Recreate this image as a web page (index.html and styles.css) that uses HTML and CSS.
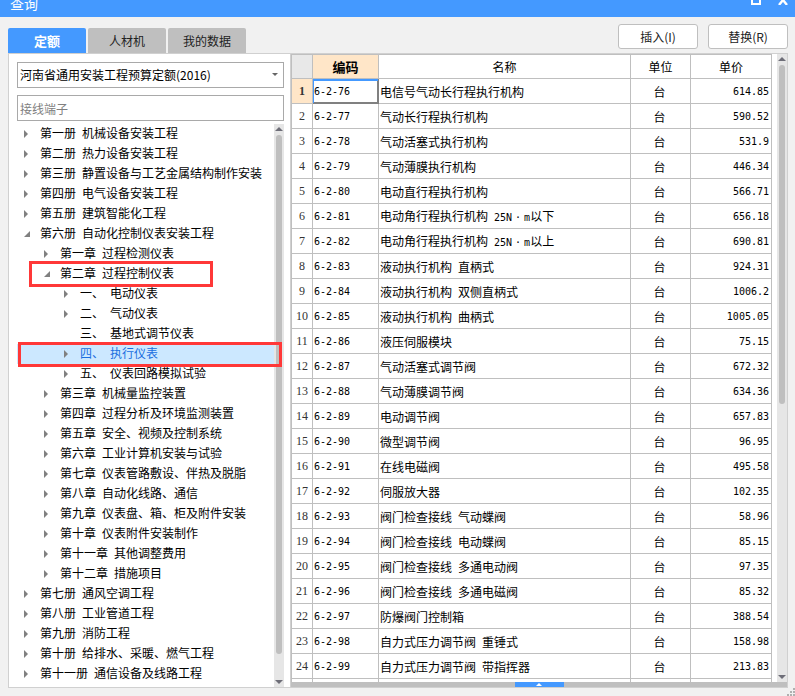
FILE: index.html
```html
<!DOCTYPE html>
<html lang="zh-CN">
<head>
<meta charset="utf-8">
<title>查询</title>
<link rel="stylesheet" href="styles.css">
</head>
<body>
<header class="titlebar">
  <h1 class="title">查询</h1>
  <div class="window-buttons">
    <button class="window-button" aria-label="最大化"><svg width="10" height="10" viewBox="0 0 10 10"><rect x="1" y="1" width="8" height="8" fill="none" stroke="#fff" stroke-width="2"/></svg></button>
    <button class="window-button" aria-label="关闭"><svg width="10" height="10" viewBox="0 0 10 10"><path d="M1 0L9 10M9 0L1 10" stroke="#fff" stroke-width="2.4"/></svg></button>
  </div>
</header>

<div class="toolbar">
  <nav class="tabs" role="tablist">
    <button class="tab tab-active" role="tab" aria-selected="true">定额</button>
    <button class="tab" role="tab" aria-selected="false">人材机</button>
    <button class="tab" role="tab" aria-selected="false">我的数据</button>
  </nav>
  <div class="actions">
    <button class="action">插入(I)</button>
    <button class="action">替换(R)</button>
  </div>
</div>

<main class="workspace">
  <section class="sidebar">
    <div class="select-wrap">
      <select class="field" aria-label="定额库"><option>河南省通用安装工程预算定额(2016)</option></select>
      <svg class="select-arrow" width="6" height="3" viewBox="0 0 6 3"><path d="M0 0H6L3 3Z" fill="#666"/></svg>
    </div>
    <input class="field" type="text" placeholder="接线端子" aria-label="搜索">
    <div class="tree-area">
      <ul class="tree" role="tree" id="tree"></ul>
      <div class="scrollbar">
        <svg class="scroll-arrow" width="8" height="4" viewBox="0 0 8 4"><path d="M0 4L4 0L8 4Z" fill="#6e6e78"/></svg>
        <div class="scroll-track"><div class="thumb thumb-tree"></div></div>
        <svg class="scroll-arrow" width="8" height="4" viewBox="0 0 8 4"><path d="M0 0L4 4L8 0Z" fill="#6e6e78"/></svg>
      </div>
    </div>
  </section>

  <section class="results">
    <div class="grid-area">
      <div class="table-wrap">
        <table class="grid">
          <colgroup><col class="col-num"><col class="col-code"><col><col class="col-unit"><col class="col-price"></colgroup>
          <thead><tr><th class="corner"></th><th class="head-active">编码</th><th>名称</th><th>单位</th><th>单价</th></tr></thead>
          <tbody id="rows"></tbody>
        </table>
      </div>
      <div class="scrollbar">
        <svg class="scroll-arrow" width="8" height="4" viewBox="0 0 8 4"><path d="M0 4L4 0L8 4Z" fill="#6e6e78"/></svg>
        <div class="scroll-track"><div class="thumb thumb-grid"></div></div>
        <svg class="scroll-arrow" width="8" height="4" viewBox="0 0 8 4"><path d="M0 0L4 4L8 0Z" fill="#6e6e78"/></svg>
      </div>
    </div>
    <div class="splitter">
      <button class="splitter-handle" aria-label="展开"><svg width="6" height="3" viewBox="0 0 6 3"><path d="M0 3L3 0L6 3Z" fill="#fff"/></svg></button>
    </div>
  </section>
</main>

<footer class="statusbar">
  <svg width="8" height="8" viewBox="0 0 8 8" fill="#b0b0b0"><path d="M6 0h2v2h-2zM3 3h2v2h-2zM6 3h2v2h-2zM0 6h2v2h-2zM3 6h2v2h-2zM6 6h2v2h-2z"/></svg>
</footer>
<script src="app.js"></script>
</body>
</html>
```
FILE: styles.css
```css
* { box-sizing: border-box; }

body {
  margin: 0;
  min-height: 100vh;
  display: flex;
  flex-direction: column;
  background: #f1f1f1;
  color: #000;
  font: 12px/20px "Noto Sans CJK SC", sans-serif;
}

button, input, select { font: inherit; color: inherit; margin: 0; }
button { border: 0; padding: 0; }

.titlebar {
  display: flex;
  justify-content: space-between;
  align-items: flex-end;
  height: 17px;
  padding: 0 7px 0 10px;
  overflow: hidden;
  background: #4499ff;
  color: #fff;
}
.title { margin: 0 0 4px; font-size: 14px; font-weight: 400; line-height: 20px; }
.window-buttons { display: flex; gap: 17px; padding-bottom: 12px; }
.window-button { display: flex; background: none; }

.toolbar {
  display: flex;
  justify-content: space-between;
  align-items: flex-end;
  height: 36px;
  padding: 0 7px 0 8px;
}
.tabs { display: flex; gap: 2px; }
.tab {
  width: 78px;
  height: 25px;
  border-radius: 2px 2px 0 0;
  background: #bfbfbf;
  color: #222;
}
.tab-active { background: #4499ff; color: #fff; font-size: 13px; font-weight: 700; }
.actions { display: flex; gap: 10px; padding-bottom: 4px; }
.action {
  width: 80px;
  height: 25px;
  border: 1px solid #bfbfbf;
  border-radius: 3px;
  background: #fff;
  color: #222;
}

.workspace {
  display: flex;
  margin: 0 7px 0 8px;
  border: 1px solid #d0d0d0;
  background: #fff;
}

.sidebar {
  display: flex;
  flex-direction: column;
  flex: 0 0 282px;
  padding: 8px 6px 0 8px;
  border-right: 1px solid #d0d0d0;
}
.field {
  width: 100%;
  height: 26px;
  padding: 0 2px;
  border: 1px solid #a9a9a9;
  border-radius: 0;
  background: #fff;
  outline: 0;
}
.field::placeholder { color: #808080; opacity: 1; }
.select-wrap { position: relative; display: flex; margin-bottom: 7px; }
.select-wrap .field { appearance: none; }
.select-arrow { position: absolute; right: 6px; top: 11px; }

.tree-area { display: flex; margin-top: 3px; }
.tree { flex: 1; min-width: 0; margin: 0; padding: 0 0 3px; list-style: none; }
.node {
  position: relative;
  display: flex;
  align-items: center;
  height: 20px;
  white-space: nowrap;
}
.level-1 { padding-left: 20px; }
.level-2 { padding-left: 40px; }
.toggle { display: flex; flex: 0 0 23px; padding-left: 7px; }
.node-selected { background: #cce8ff; color: #1a6fe0; }
.words { display: flex; gap: 6px; line-height: 18px; }
.tree .words { padding-bottom: 2px; }

/* Red frames lie over the tree and its scrollbar */
.mark { position: absolute; z-index: 1; border: 3px solid #ff3838; pointer-events: none; }
.mark-chapter { left: 12px; top: -3px; width: 184px; height: 26px; }
.mark-item { left: 1px; right: -8px; top: -2px; height: 25px; }

.scrollbar {
  display: flex;
  flex-direction: column;
  align-items: center;
  flex: 0 0 10px;
  padding: 3px 0;
  background: #e6e6e6;
}
.scroll-arrow { flex: none; }
.scroll-track { flex: 1; width: 6px; padding: 4px 0; }
.thumb { border-radius: 3px; background: #bfbfbf; }
.thumb-tree { height: 96%; }
.thumb-grid { height: 56%; }

.results { display: flex; flex-direction: column; flex: 1; min-width: 0; }
.grid-area { display: flex; flex: 1; }
.table-wrap { flex: 1; min-width: 0; padding-right: 5px; overflow: hidden; }
.grid { width: 100%; table-layout: fixed; border-spacing: 0; border-left: 1px solid #bfbfbf; border-top: 1px solid #bfbfbf; }
.grid th, .grid td {
  height: 25px;
  padding: 2px 1px 0;
  border-right: 1px solid #bfbfbf;
  border-bottom: 1px solid #bfbfbf;
  line-height: 18px;
  font-weight: 400;
  white-space: nowrap;
  overflow: hidden;
}
.grid thead th { height: 24px; padding: 0; }
.grid .corner { background: #e8e8e8; }
.grid thead .head-active { background: #ffe6c8; font-size: 13px; font-weight: 700; }
.col-num { width: 21px; }
.col-code { width: 66px; }
.col-unit { width: 60px; }
.col-price { width: 81px; }
.grid .num { padding: 0; color: #333; font-family: "Liberation Serif", serif; text-align: center; }
.grid .num-active { background: #ffe6c8; font-weight: 700; }
.grid .code, .grid .price { font-family: "DejaVu Sans Mono", monospace; font-size: 10px; }
.grid .unit { padding-right: 3px; text-align: center; }
.grid .price { padding-right: 2px; text-align: right; }
.grid .code-active { box-shadow: inset 1px 2px #4499ff, inset -1px -1px #808080; border-color: #808080; }
.grid .spare th, .grid .spare td { height: 3px; padding: 0; border-bottom: 0; }
.latin { font-family: "DejaVu Sans Mono", monospace; font-size: 10px; }
.dot { padding: 0 3px; }

.splitter { display: flex; justify-content: center; height: 5px; background: #bfbfbf; }
.splitter-handle { display: flex; justify-content: center; align-items: center; width: 49px; height: 5px; background: #4499ff; }

.statusbar { display: flex; justify-content: flex-end; align-items: flex-end; flex: 1; height: 8px; }
```
FILE: app.js
```js
// Each tree node: [level, state, label]; state is "+" closed, "-" open, "" leaf.
const nodes = [
  [0, "+", "第一册 机械设备安装工程"],
  [0, "+", "第二册 热力设备安装工程"],
  [0, "+", "第三册 静置设备与工艺金属结构制作安装"],
  [0, "+", "第四册 电气设备安装工程"],
  [0, "+", "第五册 建筑智能化工程"],
  [0, "-", "第六册 自动化控制仪表安装工程"],
  [1, "+", "第一章 过程检测仪表"],
  [1, "-", "第二章 过程控制仪表", "chapter"],
  [2, "+", "一、 电动仪表"],
  [2, "+", "二、 气动仪表"],
  [2, "", "三、 基地式调节仪表"],
  [2, "+", "四、 执行仪表", "item"],
  [2, "+", "五、 仪表回路模拟试验"],
  [1, "+", "第三章 机械量监控装置"],
  [1, "+", "第四章 过程分析及环境监测装置"],
  [1, "+", "第五章 安全、视频及控制系统"],
  [1, "+", "第六章 工业计算机安装与试验"],
  [1, "+", "第七章 仪表管路敷设、伴热及脱脂"],
  [1, "+", "第八章 自动化线路、通信"],
  [1, "+", "第九章 仪表盘、箱、柜及附件安装"],
  [1, "+", "第十章 仪表附件安装制作"],
  [1, "+", "第十一章 其他调整费用"],
  [1, "+", "第十二章 措施项目"],
  [0, "+", "第七册 通风空调工程"],
  [0, "+", "第八册 工业管道工程"],
  [0, "+", "第九册 消防工程"],
  [0, "+", "第十册 给排水、采暖、燃气工程"],
  [0, "+", "第十一册 通信设备及线路工程"]
];

// Codes run from 6-2-76 upwards.
const items = [
  ["电信号气动长行程执行机构", "614.85"],
  ["气动长行程执行机构", "590.52"],
  ["气动活塞式执行机构", "531.9"],
  ["气动薄膜执行机构", "446.34"],
  ["电动直行程执行机构", "566.71"],
  ["电动角行程执行机构 25N·m以下", "656.18"],
  ["电动角行程执行机构 25N·m以上", "690.81"],
  ["液动执行机构 直柄式", "924.31"],
  ["液动执行机构 双侧直柄式", "1006.2"],
  ["液动执行机构 曲柄式", "1005.05"],
  ["液压伺服模块", "75.15"],
  ["气动活塞式调节阀", "672.32"],
  ["气动薄膜调节阀", "634.36"],
  ["电动调节阀", "657.83"],
  ["微型调节阀", "96.95"],
  ["在线电磁阀", "495.58"],
  ["伺服放大器", "102.35"],
  ["阀门检查接线 气动蝶阀", "58.96"],
  ["阀门检查接线 电动蝶阀", "85.15"],
  ["阀门检查接线 多通电动阀", "97.35"],
  ["阀门检查接线 多通电磁阀", "85.32"],
  ["防爆阀门控制箱", "388.54"],
  ["自力式压力调节阀 重锤式", "158.98"],
  ["自力式压力调节阀 带指挥器", "213.83"]
];

const arrows = {
  "+": '<svg width="4" height="8" viewBox="0 0 4 8"><path d="M0 0L4 4L0 8Z" fill="#808080"/></svg>',
  "-": '<svg width="6" height="6" viewBox="0 0 6 6"><path d="M6 0V6H0Z" fill="#808080"/></svg>',
  "": ""
};

const words = text => '<span class="words">' + text.split(" ").map(part =>
  "<span>" + part.replace("25N·m", '<span class="latin">25N<span class="dot">·</span>m</span>') + "</span>"
).join(" ") + "</span>";

document.getElementById("tree").innerHTML = nodes.map(([level, state, label, mark]) => `
  <li class="node level-${level}${mark === "item" ? " node-selected" : ""}" role="treeitem" aria-level="${level + 1}">
    <span class="toggle">${arrows[state]}</span>${words(label)}${mark ? `<span class="mark mark-${mark}"></span>` : ""}
  </li>`).join("");

document.getElementById("rows").innerHTML = items.map(([name, price], i) => `
  <tr>
    <th class="num${i ? "" : " num-active"}">${i + 1}</th>
    <td class="code${i ? "" : " code-active"}">6-2-${76 + i}</td>
    <td>${words(name)}</td>
    <td class="unit">台</td>
    <td class="price">${price}</td>
  </tr>`).join("") + '<tr class="spare"><th></th><td></td><td></td><td></td><td></td></tr>';
```
